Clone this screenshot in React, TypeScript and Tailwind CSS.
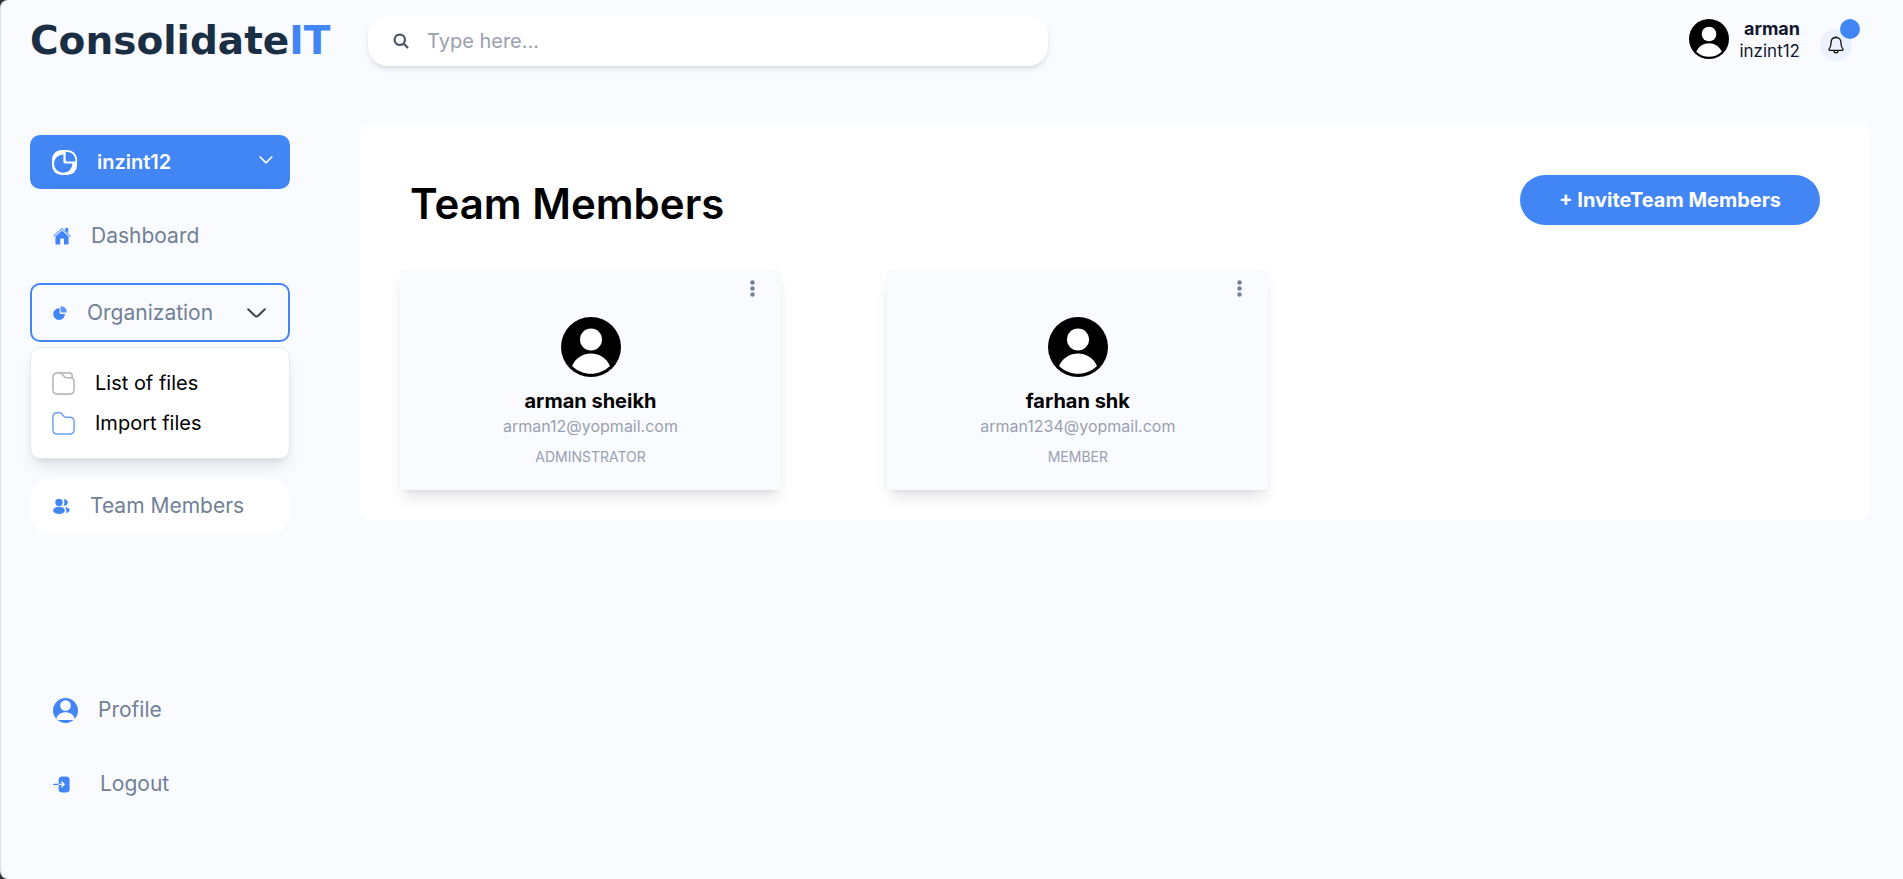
import React, { useState } from "react";
import type { ReactNode } from "react";

type Member = { name: string; email: string; role: string };

const members: Member[] = [
  { name: "arman sheikh", email: "arman12@yopmail.com", role: "ADMINSTRATOR" },
  { name: "farhan shk", email: "arman1234@yopmail.com", role: "MEMBER" },
];

function Avatar({ className }: { className: string }) {
  return (
    <svg viewBox="0 0 60 60" className={className} aria-hidden="true">
      <circle cx="30" cy="30" r="30" fill="currentColor" />
      <circle cx="30" cy="22.5" r="11" fill="#fff" />
      <path d="M11 49C18 32.2 42 32.2 49 49C38 59.4 22 59.4 11 49Z" fill="#fff" />
    </svg>
  );
}

function ProfileIcon() {
  return (
    <svg viewBox="0 0 25 25" className="size-[25px] shrink-0" aria-hidden="true">
      <circle cx="12.5" cy="12.5" r="12.5" fill="#4285f4" />
      <circle cx="12.5" cy="7.6" r="5.3" fill="#fff" />
      <path d="M3.4 20.6C5.4 12.2 19.6 12.2 21.6 20.6Q21.6 22 20 22H5Q3.4 22 3.4 20.6Z" fill="#fff" />
    </svg>
  );
}

function PieBadge() {
  return (
    <svg viewBox="0 0 25 25" className="size-[25px] shrink-0" aria-hidden="true">
      <rect width="25" height="25" rx="9.5" fill="#fff" />
      <path d="M11.4 4.4A9.2 9.2 0 1 0 20.4 13.6H13A1.6 1.6 0 0 1 11.4 12Z" fill="#4285f4" />
      <path d="M13.6 1.7C19.8 1.5 23.6 5.4 23.4 11.6H15.2Q13.6 11.6 13.6 10Z" fill="#4285f4" />
    </svg>
  );
}

function PieIcon() {
  return (
    <svg viewBox="0 0 14 14" className="size-[14px] shrink-0 text-[#4285f4]" fill="currentColor" aria-hidden="true">
      <path d="M6.6 2.2A5.9 5.9 0 1 0 12 8H8.2Q6.6 8 6.6 6.5Z" />
      <path d="M7.6 .3C11.4 .2 13.8 2.6 13.7 6.6H8.6Q7.6 6.6 7.6 5.6Z" opacity=".85" />
    </svg>
  );
}

function HomeIcon() {
  return (
    <svg viewBox="0 0 18 18" className="size-[18px] shrink-0 text-[#4285f4]" aria-hidden="true">
      <path d="M9 3.6L15.6 9.4V16.2Q15.6 17.4 14.4 17.4H11V12.4Q11 11.4 10 11.4H8.2Q7.2 11.4 7.2 12.4V17.4H3.6Q2.4 17.4 2.4 16.2V9.4Z" fill="currentColor" />
      <path d="M12.2 1H15.2V6.2L12.2 3.6Z" fill="currentColor" />
      <path d="M.8 9L9 1.5L17.2 9" fill="none" stroke="currentColor" strokeWidth="1.5" strokeLinecap="round" strokeLinejoin="round" opacity=".65" />
    </svg>
  );
}

function PeopleIcon() {
  return (
    <svg viewBox="0 0 17 17" className="size-[17px] shrink-0 text-[#4285f4]" fill="currentColor" aria-hidden="true">
      <circle cx="6" cy="4.4" r="3.7" />
      <ellipse cx="6" cy="12.4" rx="5.8" ry="3.7" />
      <path d="M10.6 1.2C13 .9 14.8 2.4 14.8 4.5S13 8 10.6 7.7C11.7 5.7 11.7 3.3 10.6 1.2Z" />
      <path d="M11.8 9.2C14.6 9.2 16.6 10.5 16.6 12.1C16.6 13.6 15 14.7 12.9 14.9C13.7 12.9 13.4 10.7 11.8 9.2Z" />
    </svg>
  );
}

function LogoutIcon() {
  return (
    <svg viewBox="0 0 17 17" className="size-[17px] shrink-0 text-[#4285f4]" fill="none" strokeLinecap="round" strokeLinejoin="round" aria-hidden="true">
      <rect x="5.6" y=".4" width="11" height="16.2" rx="3.6" fill="currentColor" />
      <path d="M.6 8.4H6" stroke="currentColor" strokeWidth="1.3" />
      <path d="M6 8.4H11M8.8 6L11.2 8.4L8.8 10.8" stroke="#fff" strokeWidth="1.3" />
    </svg>
  );
}

function FilesIcon() {
  return (
    <svg viewBox="0 0 23 23" className="size-[23px] shrink-0" fill="none" stroke="#b9b9b9" strokeWidth="1.6" strokeLinejoin="round" aria-hidden="true">
      <path d="M.9 5.5Q.9 .9 5.5 .9H7.6Q9 .9 10 2L12.4 4.8Q13.2 5.8 14.6 5.8H18Q22.1 5.8 22.1 10V17.6Q22.1 22.1 17.6 22.1H5.5Q.9 22.1 .9 17.6Z" />
      <path d="M7.6 .9H17.4Q20.2 .9 20.2 3.6V6.3" />
    </svg>
  );
}

function FolderIcon() {
  return (
    <svg viewBox="0 0 23 23" className="size-[23px] shrink-0" fill="none" stroke="#6ea1f7" strokeWidth="1.5" strokeLinejoin="round" aria-hidden="true">
      <path d="M.9 5.3Q.9 .8 5.3 .8H7.6Q9 .8 10 2L12 4.4Q12.8 5.3 14.2 5.3H17.6Q22.1 5.3 22.1 9.8V17.6Q22.1 22.1 17.6 22.1H5.3Q.9 22.1 .9 17.6Z" />
    </svg>
  );
}

function BellIcon() {
  return (
    <svg viewBox="0 0 16 18" className="h-[18px] w-4" fill="none" stroke="#111" strokeWidth="1.3" strokeLinecap="round" strokeLinejoin="round" aria-hidden="true">
      <path d="M7.3 1.1H8.7M8 1.5C4.9 1.5 3.1 3.6 3.1 6.6C3.1 10 2.4 11.4 1.2 12.9C.8 13.6 1 14.3 1.8 14.3H14.2C15 14.3 15.2 13.6 14.8 12.9C13.6 11.4 12.9 10 12.9 6.6C12.9 3.6 11.1 1.5 8 1.5Z" />
      <path d="M5.8 15.2C6.2 17.4 9.8 17.4 10.2 15.2" />
    </svg>
  );
}

function SearchIcon() {
  return (
    <svg viewBox="0 0 16 16" className="size-4 shrink-0" fill="none" stroke="#4b5563" strokeWidth="2.2" strokeLinecap="round" aria-hidden="true">
      <circle cx="6.8" cy="6.8" r="5.2" />
      <path d="M10.8 10.8L14.4 14.4" />
    </svg>
  );
}

function NavLink({ icon, label, className = "gap-5" }: { icon: ReactNode; label: string; className?: string }) {
  return (
    <a href="#" className={`flex h-[54px] items-center rounded-[20px] pl-[23px] text-[#718096] ${className}`}>
      {icon}
      <span>{label}</span>
    </a>
  );
}

function Sidebar() {
  const [open, setOpen] = useState(true);
  return (
    <nav aria-label="Main" className="flex w-[260px] shrink-0 flex-col gap-5 pt-[11px] text-[21px]">
      <button type="button" className="flex h-[54px] items-center gap-5 rounded-[10px] bg-[#4285f4] pr-[17px] pl-[22px] text-xl font-semibold text-white">
        <PieBadge />
        <span className="flex-1 text-left">inzint12</span>
        <svg viewBox="0 0 14 8" className="mb-1 h-2 w-[14px]" fill="none" stroke="currentColor" strokeWidth="1.7" strokeLinecap="round" aria-hidden="true">
          <path d="M1.2 1L7 6.8L12.8 1" />
        </svg>
      </button>
      <NavLink icon={<HomeIcon />} label="Dashboard" />
      <div className="flex flex-col gap-[5px]">
        <button
          type="button"
          aria-expanded={open}
          onClick={() => setOpen(!open)}
          className="flex h-[59px] items-center gap-5 rounded-[10px] border-2 border-[#4285f4] pr-[22px] pl-[21px] text-[#718096]"
        >
          <PieIcon />
          <span className="flex-1 text-left">Organization</span>
          <svg viewBox="0 0 19 10" className="h-[10px] w-[19px]" fill="none" stroke="#444" strokeWidth="2" strokeLinecap="round" strokeLinejoin="round" aria-hidden="true">
            <path d="M1.2 1.2L7.9 7.8Q9.5 9.2 11.1 7.8L17.8 1.2" />
          </svg>
        </button>
        {open && (
          <div className="flex flex-col rounded-[10px] border border-gray-200 bg-white py-[15px] pl-[21px] text-xl text-black shadow-lg">
            <a href="#" className="flex h-10 items-center gap-5">
              <FilesIcon />
              <span>List of files</span>
            </a>
            <a href="#" className="flex h-10 items-center gap-5">
              <FolderIcon />
              <span>Import files</span>
            </a>
          </div>
        )}
      </div>
      <NavLink icon={<PeopleIcon />} label="Team Members" className="gap-5 bg-white" />
      <div className="flex flex-col gap-5 pt-[130px]">
        <NavLink icon={<ProfileIcon />} label="Profile" />
        <NavLink icon={<LogoutIcon />} label="Logout" className="gap-[30px]" />
      </div>
    </nav>
  );
}

function Header() {
  return (
    <header className="flex h-[84px] items-start pr-[51px] pl-[29px]">
      <a href="#" className="mt-4 w-[338px] shrink-0 font-['DejaVu_Sans',sans-serif] text-[39px] leading-[50px] font-bold text-[#1a2e44]">
        Consolidate<span className="text-[#4285f4]">IT</span>
      </a>
      <label className="mt-4 flex h-[50px] w-[680px] items-center gap-[18px] rounded-[20px] bg-white pl-[25px] shadow-md">
        <SearchIcon />
        <input type="search" aria-label="Search" placeholder="Type here..." className="min-w-0 flex-1 bg-transparent text-xl outline-none placeholder:text-gray-400" />
      </label>
      <div className="mt-[17px] ml-auto flex items-start">
        <Avatar className="mt-0.5 size-10 text-black" />
        <div className="ml-[10px] text-right leading-[23px] text-slate-900">
          <p className="text-lg leading-[23px] font-bold">arman</p>
          <p className="text-[17px] leading-[23px]">inzint12</p>
        </div>
        <button type="button" aria-label="Notifications" className="relative mt-3 ml-5 flex size-8 items-center justify-center rounded-full bg-[#ebf2fe]">
          <BellIcon />
          <span className="absolute -top-[10px] -right-2 size-5 rounded-full bg-[#4285f4]" />
        </button>
      </div>
    </header>
  );
}

function MemberCard({ member }: { member: Member }) {
  return (
    <article className="flex h-[220px] w-[381px] max-w-full flex-col items-center bg-[#fafbff] shadow-lg">
      <button type="button" aria-label={`Options for ${member.name}`} className="mt-[10px] mr-[26px] self-end text-[#718096]">
        <svg viewBox="0 0 5 17" className="h-[17px] w-[5px]" fill="currentColor" aria-hidden="true">
          <circle cx="2.5" cy="2.5" r="2.2" />
          <circle cx="2.5" cy="8.5" r="2.2" />
          <circle cx="2.5" cy="14.5" r="2.2" />
        </svg>
      </button>
      <Avatar className="mt-5 size-[60px] text-black" />
      <h2 className="mt-3 text-xl leading-[25px] font-bold text-black">{member.name}</h2>
      <p className="text-base leading-6 text-gray-400">{member.email}</p>
      <p className="mt-[7px] text-sm leading-6 text-gray-400">{member.role}</p>
    </article>
  );
}

export default function App() {
  return (
    <div className="min-h-screen bg-[#333] font-['Inter',sans-serif]">
      <div className="min-h-screen rounded-l-lg border-l border-[#dcdde1] bg-[#fafbff]">
        <Header />
        <div className="flex items-start gap-[70px] pr-[33px] pl-[29px] pt-10">
          <Sidebar />
          <main className="min-w-0 flex-1 rounded-[10px] bg-white px-10 pt-[51px] pb-[30px]">
            <div className="flex items-start justify-between px-[10px]">
              <h1 className="pt-1 text-[42px] leading-[50px] font-semibold text-black">Team Members</h1>
              <button type="button" className="h-[50px] w-[300px] rounded-full bg-[#4285f4] text-xl font-bold text-white">
                + InviteTeam Members
              </button>
            </div>
            <div className="mt-[41px] grid grid-cols-3 gap-8">
              {members.map((member) => (
                <MemberCard key={member.email} member={member} />
              ))}
            </div>
          </main>
        </div>
      </div>
    </div>
  );
}
